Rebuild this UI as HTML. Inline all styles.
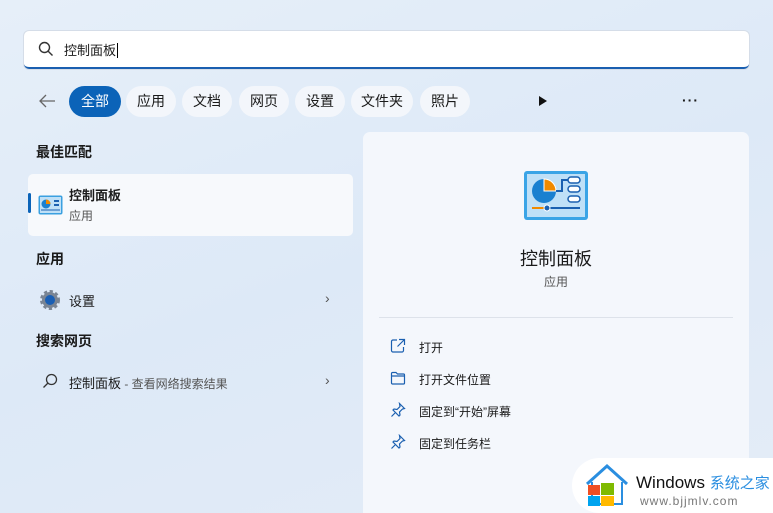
<!DOCTYPE html>
<html><head><meta charset="utf-8"><style>
*{margin:0;padding:0;box-sizing:border-box}
html,body{width:773px;height:513px;overflow:hidden}
body{position:relative;font-family:"Liberation Sans","Noto Sans CJK SC",sans-serif;background:linear-gradient(160deg,#e6eff9 0%,#dde9f7 50%,#e4ecf7 100%);color:#1a1a1a}
.a{position:absolute;white-space:nowrap}
.search{left:24px;top:31px;width:725px;height:38px;background:#fff;border-radius:5px;border-bottom:2px solid #1a5fb0;box-shadow:0 0 0 1px #d5dde8}
.pill{position:absolute;top:86px;height:31px;border-radius:16px;background:#f3f6fb;font-size:14px;line-height:31px;text-align:center;color:#1a1a1a}
.h{font-size:14px;font-weight:bold}
.t{font-size:13px}
.s{font-size:12px;color:#555}
</style></head><body>
<div class="a search">
<svg class="a" style="left:14px;top:10px" width="16" height="16" viewBox="0 0 16 16"><circle cx="6.5" cy="6.5" r="5" fill="none" stroke="#333" stroke-width="1.4"/><line x1="10.2" y1="10.2" x2="14.5" y2="14.5" stroke="#333" stroke-width="1.4"/></svg>
<div class="a t" style="left:40px;top:9px">控制面板<span style="border-left:1px solid #000;margin-left:1px"></span></div>
</div>
<svg class="a" style="left:38px;top:93px" width="18" height="16" viewBox="0 0 18 16"><path d="M17 8H2M8 2L2 8l6 6" fill="none" stroke="#666" stroke-width="1.3"/></svg>
<div class="pill" style="left:69px;width:52px;background:#0b63b8;color:#fff">全部</div>
<div class="pill" style="left:126px;width:50px">应用</div>
<div class="pill" style="left:182px;width:50px">文档</div>
<div class="pill" style="left:239px;width:50px">网页</div>
<div class="pill" style="left:295px;width:50px">设置</div>
<div class="pill" style="left:351px;width:62px">文件夹</div>
<div class="pill" style="left:420px;width:50px">照片</div>
<svg class="a" style="left:538px;top:95px" width="10" height="12"><path d="M1 1L9 6L1 11Z" fill="#111"/></svg>
<div class="a" style="left:682px;top:92px;font-size:14px;letter-spacing:1px;font-weight:bold">···</div>

<div class="a h" style="left:36px;top:142px">最佳匹配</div>
<div class="a" style="left:28px;top:174px;width:325px;height:62px;background:#f7f9fc;border-radius:5px"></div>
<div class="a" style="left:28px;top:193px;width:3px;height:20px;background:#0b63b8;border-radius:2px"></div>
<svg class="a" style="left:38px;top:195px" width="25" height="20" viewBox="0 0 25 20"><rect x="0.5" y="0.5" width="24" height="19" rx="2" fill="#3aa0e0"/><rect x="2" y="2" width="21" height="16" fill="#bfe0f7"/><circle cx="8" cy="9" r="4.5" fill="#1a80d0"/><path d="M8 9V4.5A4.5 4.5 0 0 1 12.5 9Z" fill="#f08a00"/><rect x="16" y="5" width="5" height="2" fill="#1a60b0"/><rect x="16" y="9" width="5" height="2" fill="#1a60b0"/><line x1="3" y1="15" x2="22" y2="15" stroke="#1a60b0"/></svg>
<div class="a h" style="left:69px;top:185px;font-size:13px">控制面板</div>
<div class="a s" style="left:69px;top:207px">应用</div>

<div class="a h" style="left:36px;top:249px">应用</div>
<svg class="a" style="left:39px;top:289px" width="22" height="22" viewBox="0 0 22 22"><circle cx="11" cy="11" r="8" fill="#7a8594" stroke="#7a8594" stroke-width="4" stroke-dasharray="3 2.3"/><circle cx="11" cy="11" r="5" fill="#1a5fb4"/></svg>
<div class="a t" style="left:69px;top:291px">设置</div>
<div class="a" style="left:325px;top:290px;font-size:14px;color:#555">›</div>

<div class="a h" style="left:36px;top:331px">搜索网页</div>
<svg class="a" style="left:42px;top:373px" width="16" height="16" viewBox="0 0 16 16"><circle cx="9.5" cy="6.5" r="5" fill="none" stroke="#333" stroke-width="1.3"/><line x1="6" y1="10" x2="1.5" y2="14.5" stroke="#333" stroke-width="1.3"/></svg>
<div class="a t" style="left:69px;top:373px">控制面板<span style="font-size:12px;color:#555"> - 查看网络搜索结果</span></div>
<div class="a" style="left:325px;top:372px;font-size:14px;color:#555">›</div>

<div class="a" style="left:363px;top:132px;width:386px;height:381px;background:#f4f7fc;border-radius:7px 7px 0 0"></div>
<svg class="a" style="left:524px;top:171px" width="64" height="49" viewBox="0 0 64 49"><rect x="0" y="0" width="64" height="49" rx="3" fill="#3aa4e6"/><rect x="3" y="3" width="58" height="43" fill="#bfe0f7"/><circle cx="20" cy="20" r="12" fill="#1a80d0"/><path d="M20 20V8A12 12 0 0 1 32 20Z" fill="#f08a00" stroke="#fff" stroke-width="1"/><path d="M32 20h6V9h6" fill="none" stroke="#1a60b0" stroke-width="2"/><rect x="44" y="6" width="12" height="6" rx="3" fill="#fff" stroke="#1a60b0" stroke-width="1.5"/><rect x="44" y="15" width="12" height="6" rx="3" fill="#fff" stroke="#1a60b0" stroke-width="1.5"/><rect x="44" y="25" width="12" height="6" rx="3" fill="#fff" stroke="#1a60b0" stroke-width="1.5"/><line x1="8" y1="37" x2="22" y2="37" stroke="#f08a00" stroke-width="2"/><line x1="22" y1="37" x2="56" y2="37" stroke="#1a60b0" stroke-width="2"/><circle cx="23" cy="37" r="3" fill="#1a60b0" stroke="#fff"/></svg>
<div class="a" style="left:363px;width:386px;top:245px;text-align:center;font-size:18px">控制面板</div>
<div class="a s" style="left:363px;width:386px;top:273px;text-align:center">应用</div>
<div class="a" style="left:379px;top:317px;width:354px;height:1px;background:#dde2ea"></div>
<svg class="a" style="left:390px;top:338px" width="16" height="16" viewBox="0 0 16 16" fill="none" stroke="#1a5fb0" stroke-width="1.2"><path d="M7 2H3a1.5 1.5 0 0 0-1.5 1.5v9A1.5 1.5 0 0 0 3 14h9a1.5 1.5 0 0 0 1.5-1.5V9M9 1.5h5.5V7M14.5 1.5L7.5 8.5"/></svg>
<div class="a s" style="left:419px;top:339px;color:#1a1a1a">打开</div>
<svg class="a" style="left:390px;top:370px" width="16" height="16" viewBox="0 0 16 16" fill="none" stroke="#1a5fb0" stroke-width="1.2"><path d="M1.5 3.5a1 1 0 0 1 1-1h3.5l1.5 1.5h6a1 1 0 0 1 1 1v8a1 1 0 0 1-1 1h-11a1 1 0 0 1-1-1z M1.5 6h13"/></svg>
<div class="a s" style="left:419px;top:371px;color:#1a1a1a">打开文件位置</div>
<svg class="a" style="left:390px;top:402px" width="16" height="16" viewBox="0 0 16 16" fill="none" stroke="#1a5fb0" stroke-width="1.2"><path d="M9.5 1.5l5 5-2 .5-3 3 .5 3-1 1-6-6 1-1 3 .5 3-3zM5 11l-3.5 3.5"/></svg>
<div class="a s" style="left:419px;top:403px;color:#1a1a1a">固定到“开始”屏幕</div>
<svg class="a" style="left:390px;top:434px" width="16" height="16" viewBox="0 0 16 16" fill="none" stroke="#1a5fb0" stroke-width="1.2"><path d="M9.5 1.5l5 5-2 .5-3 3 .5 3-1 1-6-6 1-1 3 .5 3-3zM5 11l-3.5 3.5"/></svg>
<div class="a s" style="left:419px;top:435px;color:#1a1a1a">固定到任务栏</div>

<div class="a" style="left:572px;top:458px;width:201px;height:55px;background:#fff;border-radius:28px 0 0 28px"></div>
<svg class="a" style="left:584px;top:462px" width="46" height="46" viewBox="0 0 46 46"><path d="M3 22L23 4l20 18" fill="none" stroke="#2a8ee0" stroke-width="3"/><path d="M8 20v22h30V20" fill="none" stroke="#2a8ee0" stroke-width="2"/><rect x="4" y="23" width="12" height="10" fill="#f04f23"/><rect x="17" y="21" width="13" height="12" fill="#7fba00"/><rect x="4" y="34" width="12" height="10" fill="#00a4ef"/><rect x="17" y="34" width="13" height="10" fill="#ffb900"/></svg>
<div class="a" style="left:636px;top:472px;font-size:17px;color:#111">Windows <span style="color:#2a8ee0;font-size:15px">系统之家</span></div>
<div class="a" style="left:640px;top:494px;font-size:12px;color:#777;letter-spacing:1px">www.bjjmlv.com</div>
</body></html>
